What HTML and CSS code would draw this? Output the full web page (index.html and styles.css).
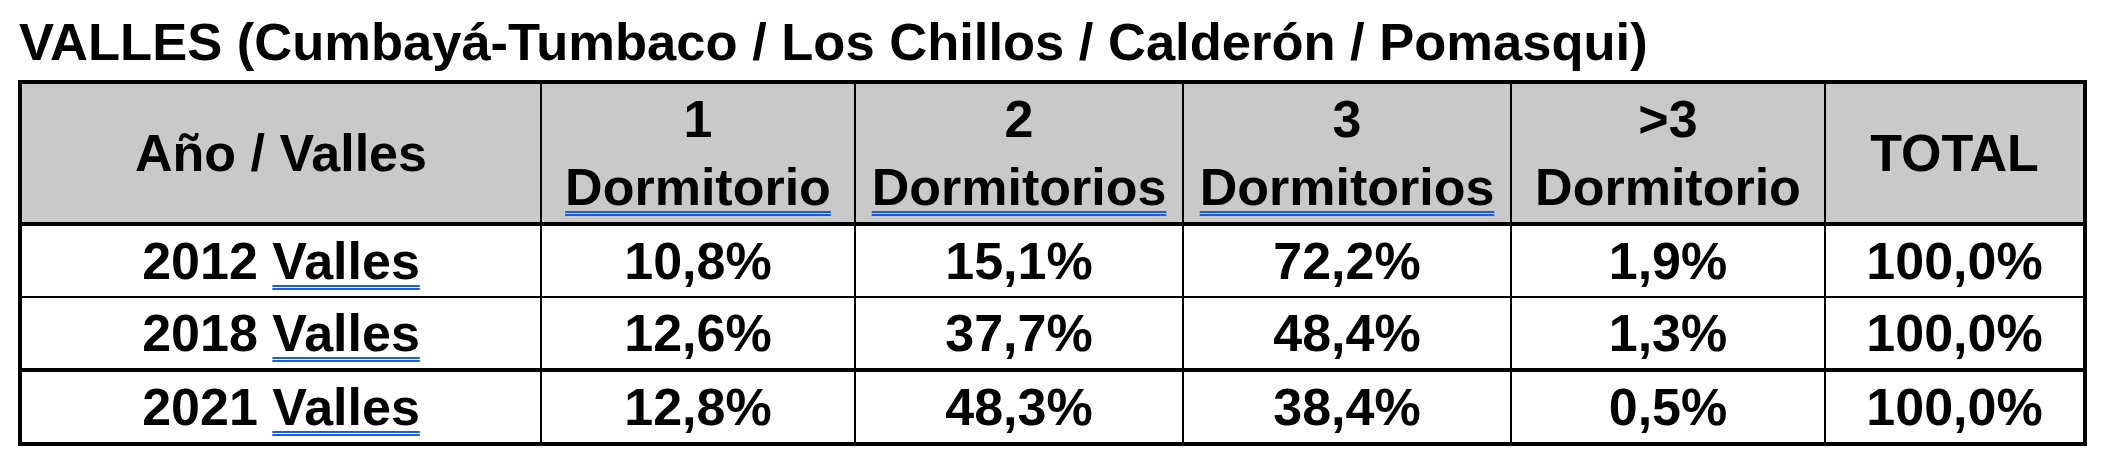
FILE: index.html
```html
<!DOCTYPE html>
<html lang="es">
<head>
<meta charset="utf-8">
<title>Valles</title>
<link rel="stylesheet" href="styles.css">
</head>
<body>
<div class="page">
  <h1 class="title">VALLES (Cumbayá-Tumbaco / Los Chillos / Calderón / Pomasqui)</h1>
  <table class="data">
    <colgroup>
      <col class="c0"><col class="c1"><col class="c2"><col class="c3"><col class="c4"><col class="c5">
    </colgroup>
    <thead>
      <tr>
        <th>Año / Valles</th>
        <th>1<br><span class="sp">Dormitorio</span></th>
        <th>2<br><span class="sp">Dormitorios</span></th>
        <th>3<br><span class="sp">Dormitorios</span></th>
        <th>&gt;3<br>Dormitorio</th>
        <th>TOTAL</th>
      </tr>
    </thead>
    <tbody>
      <tr>
        <td>2012 <span class="sp">Valles</span></td>
        <td>10,8%</td><td>15,1%</td><td>72,2%</td><td>1,9%</td><td>100,0%</td>
      </tr>
      <tr class="thick">
        <td>2018 <span class="sp">Valles</span></td>
        <td>12,6%</td><td>37,7%</td><td>48,4%</td><td>1,3%</td><td>100,0%</td>
      </tr>
      <tr>
        <td>2021 <span class="sp">Valles</span></td>
        <td>12,8%</td><td>48,3%</td><td>38,4%</td><td>0,5%</td><td>100,0%</td>
      </tr>
    </tbody>
  </table>
</div>
</body>
</html>
```
FILE: styles.css
```css
html, body {
  margin: 0;
  padding: 0;
  background: #ffffff;
}
.page {
  padding: 11px 0 0 18px;
  font-family: "Liberation Sans", Arial, sans-serif;
  font-weight: bold;
  color: #000;
}
.title {
  margin: 0 0 8px 1px;
  font-size: 52.5px;
  line-height: 61px;
  font-weight: bold;
  white-space: nowrap;
}
.data {
  border-collapse: collapse;
  table-layout: fixed;
  width: 2069px;
  border: 4px solid #000;
  font-size: 52px;
}
.c0 { width: 521px; }
.c1 { width: 314px; }
.c2 { width: 328px; }
.c3 { width: 328px; }
.c4 { width: 314px; }
.c5 { width: 260px; }
.data th, .data td {
  border: 2px solid #000;
  padding: 1px 0;
  line-height: 68px;
  text-align: center;
  vertical-align: middle;
  white-space: nowrap;
  font-weight: bold;
}
.data th {
  background: #c9c9c9;
  border-bottom: 4px solid #000;
}
.data tr.thick td {
  border-bottom: 4px solid #000;
}
.sp {
  text-decoration-line: underline;
  text-decoration-style: double;
  text-decoration-color: #1f5fd6;
  text-decoration-thickness: 2px;
  text-underline-offset: 6px;
}
```
